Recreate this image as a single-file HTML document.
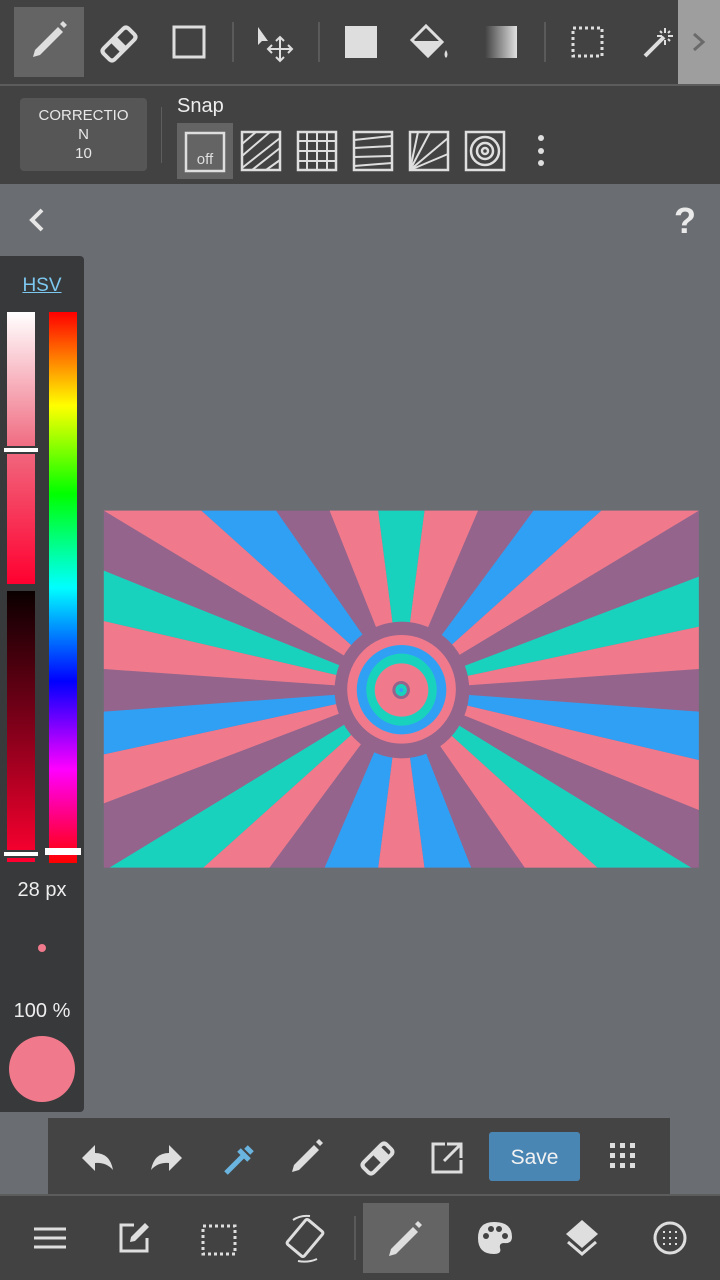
<!DOCTYPE html>
<html><head><meta charset="utf-8"><style>
*{margin:0;padding:0;box-sizing:border-box}
body{width:720px;height:1280px;background:#6a6d72;position:relative;overflow:hidden;font-family:"Liberation Sans",sans-serif}
.a{position:absolute}
svg{position:absolute;overflow:visible}
</style></head><body>
<div class="a" style="left:0;top:0;width:720px;height:85px;background:#424242"></div>
<div class="a" style="left:0;top:84px;width:720px;height:2px;background:#5c5c5c"></div>
<div class="a" style="left:14px;top:7px;width:70px;height:70px;background:#646464"></div>
<div class="a" style="left:678px;top:0;width:42px;height:84px;background:#9e9e9e"></div>
<svg style="left:0;top:0" width="720" height="85" fill="#dedede" stroke="#dedede">
<path d="M33 57 L35 50 L58 27 L63 32 L40 55 Z" stroke="none"/><path d="M60 24 L63 21 L67 25 L64 28Z" stroke="none"/>
<path d="M104 48 L123 29 Q126 26 129 29 L134 34 Q137 37 134 40 L115 59 Q112 62 109 59 L104 54 Q101 51 104 48Z" fill="none" stroke-width="4"/><path d="M102 50 L112 60 L106 58Z" stroke="none"/><path d="M110 42 L121 53 L127 47 L116 36Z" stroke="none"/>
<rect x="174" y="27" width="30" height="30" fill="none" stroke-width="3"/>
<line x1="233" y1="22" x2="233" y2="62" stroke="#5a5a5a" stroke-width="2"/>
<path d="M258 27 L258 45 L262 41 L268 41Z" stroke="none"/>
<path d="M280 37 V61 M268 49 H292 M276 41 L280 37 L284 41 M276 57 L280 61 L284 57 M272 45 L268 49 L272 53 M288 45 L292 49 L288 53" fill="none" stroke-width="2"/>
<line x1="319" y1="22" x2="319" y2="62" stroke="#5a5a5a" stroke-width="2"/>
<rect x="345" y="26" width="32" height="32" stroke="none"/>
<path d="M412 40 L426 26 L442 42 L428 56 Z" fill="none" stroke-width="3"/><path d="M413 41 L441 41 L428 55Z" stroke="none"/><path d="M446 50 Q449 55 446 58 Q443 55 446 50Z" stroke="none"/>
<defs><linearGradient id="g1"><stop offset="0" stop-color="#424242"/><stop offset="1" stop-color="#e0e0e0"/></linearGradient></defs>
<rect x="485" y="26" width="32" height="32" fill="url(#g1)" stroke="none"/>
<line x1="545" y1="22" x2="545" y2="62" stroke="#5a5a5a" stroke-width="2"/>
<rect x="573" y="28" width="29" height="28" fill="none" stroke-width="3" stroke-dasharray="3 3"/>
<path d="M645 56 L664 37" stroke-width="4"/><path d="M665 28 V33 M665 40 V45 M657 36 H662 M668 36 H673 M660 31 L662 33 M670 31 L668 33 M670 41 L668 39" stroke-width="2"/>
<path d="M694 34 L703 42 L694 50" fill="none" stroke="#6a6a6a" stroke-width="3"/>
</svg>
<div class="a" style="left:0;top:86px;width:720px;height:98px;background:#424242"></div>
<div class="a" style="left:20px;top:98px;width:127px;height:73px;background:#565656;border-radius:4px;color:#e8e8e8;font-size:15px;text-align:center;line-height:19px;padding-top:8px">CORRECTIO<br>N<br>10</div>
<div class="a" style="left:161px;top:107px;width:1px;height:56px;background:#5e5e5e"></div>
<div class="a" style="left:177px;top:95px;color:#eee;font-size:20px">Snap</div>
<div class="a" style="left:177px;top:123px;width:56px;height:56px;background:#646464"></div>
<svg style="left:0;top:120px" width="720" height="60" fill="none" stroke="#dedede" stroke-width="2.5">
<rect x="186" y="13" width="38" height="38"/><text x="205" y="44" font-size="15" fill="#dedede" stroke="none" text-anchor="middle" font-family="Liberation Sans">off</text>
<rect x="242" y="12" width="38" height="38"/><path d="M242 24 L256 12 M242 36 L270 12 M242 48 L280 18 M252 50 L280 28 M266 50 L280 40" stroke-width="2"/>
<rect x="298" y="12" width="38" height="38"/><path d="M307 12V50 M317 12V50 M327 12V50 M298 21H336 M298 31H336 M298 41H336" stroke-width="2"/>
<rect x="354" y="12" width="38" height="38"/><path d="M354 20 L392 16 M354 28 L392 26 M354 37 L392 36 M354 46 L392 43" stroke-width="2"/>
<rect x="410" y="12" width="38" height="38"/><path d="M410 50 L418 12 M410 50 L430 12 M410 50 L448 18 M410 50 L448 34 M410 50 L440 50" stroke-width="2"/>
<rect x="466" y="12" width="38" height="38"/><circle cx="485" cy="31" r="14"/><circle cx="485" cy="31" r="8"/><circle cx="485" cy="31" r="3"/>
<circle cx="541" cy="18" r="3" fill="#dedede" stroke="none"/><circle cx="541" cy="31" r="3" fill="#dedede" stroke="none"/><circle cx="541" cy="43" r="3" fill="#dedede" stroke="none"/>
</svg>
<svg style="left:0;top:190px" width="720" height="60"><path d="M42 20 L32 30 L42 40" fill="none" stroke="#e6e6e6" stroke-width="4"/>
<text x="685" y="43" font-size="36" font-weight="bold" fill="#eaeaea" text-anchor="middle" font-family="Liberation Sans">?</text></svg>
<div class="a" style="left:0;top:256px;width:84px;height:856px;background:#38393b;border-radius:0 4px 4px 0"></div>
<div class="a" style="left:0;top:275px;width:84px;text-align:center;color:#7cc8f0;font-size:19px;text-decoration:underline">HSV</div>
<div class="a" style="left:7px;top:312px;width:28px;height:272px;background:linear-gradient(#fff,#f06a80 50%,#ff0030)"></div>
<div class="a" style="left:7px;top:591px;width:28px;height:271px;background:linear-gradient(#0a0000,#80001a 50%,#ff0030)"></div>
<div class="a" style="left:49px;top:312px;width:28px;height:551px;background:linear-gradient(#f00,#ff0 17%,#0f0 33%,#0ff 50%,#00f 67%,#f0f 83%,#f00)"></div>
<div class="a" style="left:2px;top:446px;width:38px;height:8px;background:#fff;border:2px solid #38393b"></div>
<div class="a" style="left:2px;top:850px;width:38px;height:8px;background:#fff;border:2px solid #38393b"></div>
<div class="a" style="left:45px;top:848px;width:36px;height:7px;background:#fff"></div>
<div class="a" style="left:0;top:879px;width:84px;text-align:center;color:#eee;font-size:20px">28 px</div>
<div class="a" style="left:38px;top:944px;width:8px;height:8px;border-radius:50%;background:#f07a8c"></div>
<div class="a" style="left:0;top:1000px;width:84px;text-align:center;color:#eee;font-size:20px">100 %</div>
<div class="a" style="left:9px;top:1036px;width:66px;height:66px;border-radius:50%;background:#f07a8c"></div>
<svg style="left:100px;top:505px" width="600" height="365" viewBox="0 0 1568 1095" preserveAspectRatio="none">
<rect x="10" y="17" width="1555" height="1071" fill="#94648c"/>
<g fill="#f07a8c"><polygon points="787,555 10,17 265,17"/><polygon points="787,555 600,17 727,17"/><polygon points="787,555 848,17 988,17"/><polygon points="787,555 1310,17 1565,17"/><polygon points="787,555 1565,365 1565,492"/><polygon points="787,555 1565,765 1565,915"/><polygon points="787,555 1300,1088 1110,1088"/><polygon points="787,555 848,1088 727,1088"/><polygon points="787,555 443,1088 270,1088"/><polygon points="787,555 10,895 10,748"/><polygon points="787,555 10,492 10,348"/></g>
<g fill="#30a0f4"><polygon points="787,555 265,17 460,17"/><polygon points="787,555 1133,17 1310,17"/><polygon points="787,555 1565,620 1565,765"/><polygon points="787,555 970,1088 848,1088"/><polygon points="787,555 727,1088 587,1088"/><polygon points="787,555 10,748 10,620"/></g>
<g fill="#19d2bd"><polygon points="787,555 727,17 848,17"/><polygon points="787,555 1565,215 1565,365"/><polygon points="787,555 1545,1088 1300,1088"/><polygon points="787,555 270,1088 25,1088"/><polygon points="787,555 10,348 10,197"/></g>
<ellipse cx="789" cy="555" rx="176" ry="205" fill="#94648c"/>
<ellipse cx="788" cy="553" rx="142" ry="163" fill="#f07a8c"/>
<ellipse cx="788" cy="554" rx="117" ry="134" fill="#30a0f4"/>
<ellipse cx="788" cy="554" rx="92" ry="108" fill="#19d2bd"/>
<ellipse cx="788" cy="555" rx="70" ry="80" fill="#f07a8c"/>
<ellipse cx="787" cy="555" rx="23" ry="27" fill="#94648c"/>
<ellipse cx="787" cy="555" rx="15" ry="18" fill="#19d2bd"/>
<ellipse cx="787" cy="555" rx="5" ry="6" fill="#30a0f4"/>
</svg>
<div class="a" style="left:48px;top:1118px;width:622px;height:76px;background:#444"></div>
<div class="a" style="left:489px;top:1132px;width:91px;height:49px;background:#4a86b4;border-radius:3px;color:#f2f2f2;font-size:21px;text-align:center;line-height:51px">Save</div>
<svg style="left:0;top:1118px" width="720" height="76" fill="#dedede" stroke="#dedede">
<path d="M82 40 L95 27 V35 Q110 35 113 52 Q106 44 95 45 V53Z" stroke="none"/>
<path d="M182 40 L169 27 V35 Q154 35 151 52 Q158 44 169 45 V53Z" stroke="none"/>
<path d="M226 55 L244 37 M239 32 L249 42 M246 29 L252 35" stroke="#6ab4e0" stroke-width="5" fill="none"/>
<path d="M292 54 L294 47 L314 27 L319 32 L299 52Z" stroke="none"/><path d="M316 24 L319 21 L323 25 L320 28Z" stroke="none"/>
<path d="M364 44 L381 27 Q384 24 387 27 L391 31 Q394 34 391 37 L374 54 Q371 57 368 54 L364 50 Q361 47 364 44Z" fill="none" stroke-width="4"/><path d="M372 36 L383 47 L391 39 L380 28Z" stroke="none"/>
<path d="M445 26 H433 V54 H461 V42 M447 26 H461 V40 M461 26 L444 43" fill="none" stroke-width="3"/>
<g stroke="none"><rect x="610" y="25" width="5" height="5"/><rect x="620" y="25" width="5" height="5"/><rect x="630" y="25" width="5" height="5"/><rect x="610" y="35" width="5" height="5"/><rect x="620" y="35" width="5" height="5"/><rect x="630" y="35" width="5" height="5"/><rect x="610" y="45" width="5" height="5"/><rect x="620" y="45" width="5" height="5"/><rect x="630" y="45" width="5" height="5"/></g>
</svg>
<div class="a" style="left:0;top:1194px;width:720px;height:2px;background:#5c5c5c"></div>
<div class="a" style="left:0;top:1196px;width:720px;height:84px;background:#424242"></div>
<div class="a" style="left:363px;top:1203px;width:86px;height:70px;background:#646464"></div>
<svg style="left:0;top:1196px" width="720" height="84" fill="#dedede" stroke="#dedede">
<path d="M34 33 H66 M34 42 H66 M34 51 H66" stroke-width="3"/>
<path d="M134 29 H121 V55 H147 V42" fill="none" stroke-width="3"/><path d="M130 46 L131 41 L145 27 L149 31 L135 45Z" stroke="none"/>
<rect x="203" y="30" width="32" height="28" fill="none" stroke-width="3" stroke-dasharray="3 3"/>
<g transform="rotate(40 305 42)"><rect x="294" y="26" width="22" height="32" rx="2" fill="none" stroke-width="3"/></g>
<path d="M293 24 Q300 19 310 20 M317 63 Q308 67 298 65" fill="none" stroke-width="2"/>
<line x1="355" y1="20" x2="355" y2="64" stroke="#5a5a5a" stroke-width="2"/>
<path d="M389 60 L391 53 L413 31 L418 36 L396 58Z" stroke="none"/><path d="M415 28 L418 25 L422 29 L419 32Z" stroke="none"/>
<path d="M494 26 Q512 26 512 41 Q512 48 504 47 Q499 47 500 52 Q502 58 494 58 Q478 58 478 42 Q478 26 494 26Z" stroke="none"/>
<g fill="#424242" stroke="none"><circle cx="486" cy="40" r="3"/><circle cx="491" cy="33" r="3"/><circle cx="499" cy="33" r="3"/><circle cx="505" cy="40" r="3"/></g>
<path d="M582 24 L598 38 L582 52 L566 38Z" stroke="none"/><path d="M568 46 L582 58 L596 46" fill="none" stroke-width="3"/>
<circle cx="670" cy="42" r="15" fill="none" stroke-width="3"/>
<g stroke="none"><rect x="663" y="35" width="2" height="2"/><rect x="669" y="35" width="2" height="2"/><rect x="675" y="35" width="2" height="2"/><rect x="663" y="41" width="2" height="2"/><rect x="669" y="41" width="2" height="2"/><rect x="675" y="41" width="2" height="2"/><rect x="663" y="47" width="2" height="2"/><rect x="669" y="47" width="2" height="2"/><rect x="675" y="47" width="2" height="2"/></g>
</svg>
</body></html>
